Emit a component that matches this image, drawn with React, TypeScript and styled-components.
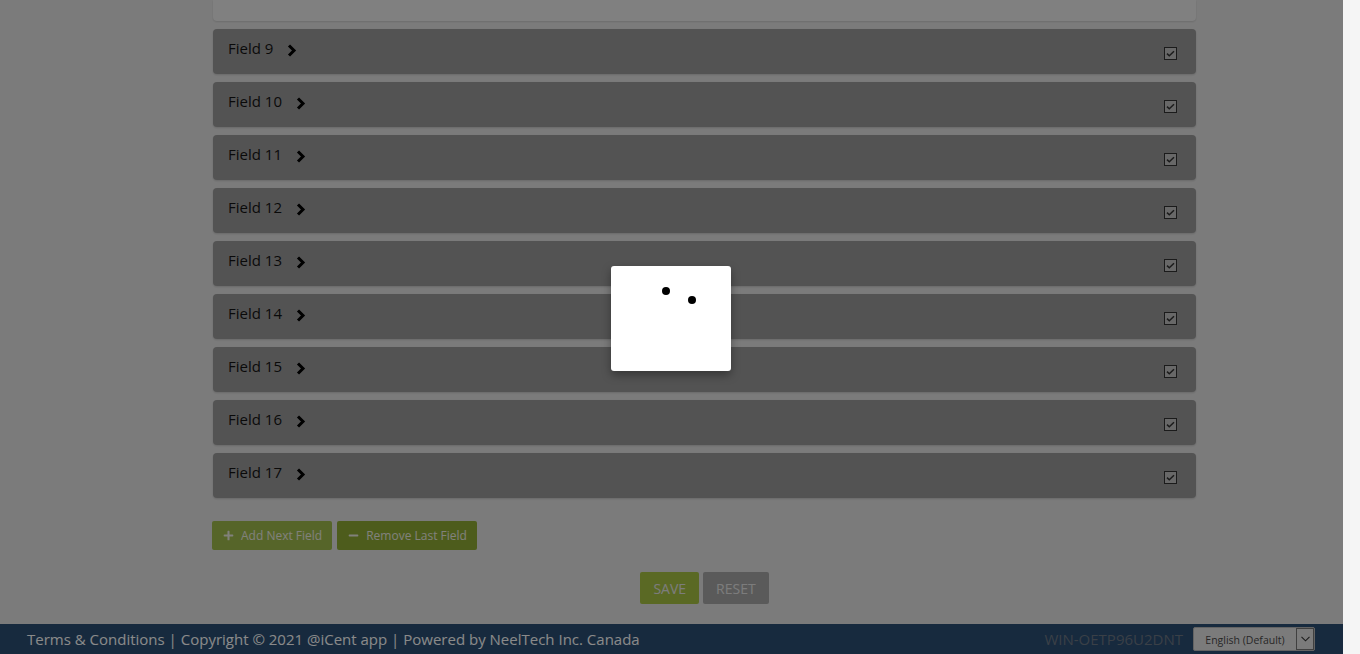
import styled, { createGlobalStyle } from 'styled-components'
import { FaPlus, FaMinus } from 'react-icons/fa'

const GlobalStyle = createGlobalStyle`
  html, body {
    margin: 0;
    padding: 0;
    overflow: hidden;
  }
  body {
    font-family: 'Open Sans', 'Liberation Sans', sans-serif;
    background: #f5f5f5;
  }
`

const fields = [9, 10, 11, 12, 13, 14, 15, 16, 17]

const CheckIcon: React.FC = () => (
  <svg width="13" height="13" viewBox="0 0 13 13">
    <rect x="0.5" y="0.5" width="12" height="12" fill="#c0c0c0" stroke="#333" />
    <path d="M3 6.6 L5.3 8.8 L10 4.2" fill="none" stroke="#333" strokeWidth="1.5" />
  </svg>
)

const ChevronIcon: React.FC = () => (
  <svg width="10" height="13" viewBox="0 0 10 13">
    <path d="M2 1.5 L7 6.5 L2 11.5" fill="none" stroke="#000" strokeWidth="3" strokeLinejoin="miter" />
  </svg>
)

const App: React.FC = () => {
  return (
    <>
      <GlobalStyle />
      <Screen>
        <Page>
          <Main>
            <Content>
              <TopPanel />
              <FieldList>
                {fields.map((n) => (
                  <FieldRow key={n}>
                    <FieldTitle>
                      Field {n}
                      <Chevron>
                        <ChevronIcon />
                      </Chevron>
                    </FieldTitle>
                    <CheckIcon />
                  </FieldRow>
                ))}
              </FieldList>
              <ActionRow>
                <SmallButton $tone="#a0bb4c">
                  <FaPlus size={10} />
                  Add Next Field
                </SmallButton>
                <SmallButton $tone="#8eab34">
                  <FaMinus size={10} />
                  Remove Last Field
                </SmallButton>
              </ActionRow>
              <FormButtons>
                <FormButton $tone="#a6c244">SAVE</FormButton>
                <FormButton $tone="#a7a7a7">RESET</FormButton>
              </FormButtons>
            </Content>
          </Main>
          <Footer>
            <FooterText>
              Terms &amp; Conditions | Copyright © 2021 @iCent app | Powered by NeelTech Inc. Canada
            </FooterText>
            <FooterRight>
              <HostName>WIN-OETP96U2DNT</HostName>
              <LangSelect>
                <LangLabel>English (Default)</LangLabel>
                <LangArrow>
                  <svg width="9" height="6" viewBox="0 0 9 6">
                    <path d="M0.5 0.8 L4.5 4.8 L8.5 0.8" fill="none" stroke="#333" strokeWidth="1.1" />
                  </svg>
                </LangArrow>
              </LangSelect>
            </FooterRight>
          </Footer>
          <Backdrop />
          <LoaderBox>
            <Dot style={{ left: 51, top: 21 }} />
            <Dot style={{ left: 77, top: 30 }} />
          </LoaderBox>
        </Page>
        <Scrollbar />
      </Screen>
    </>
  )
}

export default App

const Screen = styled.div`
  display: flex;
  width: 1360px;
  height: 654px;
  overflow: hidden;
`

const Page = styled.div`
  position: relative;
  width: 1343px;
  height: 654px;
  display: flex;
  flex-direction: column;
  background: #e4e4e4;
`

const Scrollbar = styled.div`
  width: 17px;
  height: 654px;
  background: #f5f5f5;
`

const Main = styled.div`
  height: 624px;
  padding-left: 213px;
  box-sizing: border-box;
`

const Content = styled.div`
  width: 983px;
  display: flex;
  flex-direction: column;
`

const TopPanel = styled.div`
  height: 21px;
  background: #ececec;
  border-radius: 0 0 4px 4px;
  box-shadow: 0 1px 2px rgba(0, 0, 0, 0.12);
`

const FieldList = styled.div`
  display: flex;
  flex-direction: column;
  gap: 8px;
  margin-top: 8px;
`

const FieldRow = styled.div`
  height: 45px;
  display: flex;
  align-items: center;
  justify-content: space-between;
  padding: 0 19px 0 15px;
  background: #9a9a9a;
  border-radius: 4px;
  box-shadow: 0 1px 2px rgba(0, 0, 0, 0.15);
  box-sizing: border-box;
  > svg {
    margin-top: 3px;
  }
`

const FieldTitle = styled.div`
  display: flex;
  align-items: center;
  font-size: 15px;
  color: #141414;
  margin-top: -7px;
`

const Chevron = styled.span`
  display: inline-flex;
  margin-left: 14px;
  svg {
    margin-top: 4px;
  }
`

const ActionRow = styled.div`
  display: flex;
  gap: 5px;
  margin: 23px 0 0 -1px;
`

const SmallButton = styled.button<{ $tone: string }>`
  display: flex;
  align-items: center;
  gap: 7px;
  height: 29px;
  padding: 0 10px 0 11px;
  border: none;
  border-radius: 2px;
  background: ${(p) => p.$tone};
  color: #eeeee4;
  font-family: 'Open Sans', 'Liberation Sans', sans-serif;
  font-size: 12px;
  svg {
    width: 11px;
    height: 11px;
  }
`

const FormButtons = styled.div`
  display: flex;
  justify-content: center;
  gap: 4px;
  margin: 22px 0 0 0;
`

const FormButton = styled.button<{ $tone: string }>`
  height: 32px;
  padding: 0 13px;
  border: none;
  border-radius: 2px;
  background: ${(p) => p.$tone};
  color: #e6e6e6;
  font-family: 'Open Sans', 'Liberation Sans', sans-serif;
  font-size: 14px;
`

const Footer = styled.div`
  height: 30px;
  display: flex;
  align-items: center;
  justify-content: space-between;
  padding: 0 28px 0 27px;
  background: #2b4e73;
`

const FooterText = styled.div`
  font-size: 15px;
  color: #ffffff;
`

const FooterRight = styled.div`
  display: flex;
  align-items: center;
  gap: 10px;
`

const HostName = styled.div`
  font-size: 15px;
  color: #6b7683;
`

const LangSelect = styled.div`
  width: 122px;
  height: 24px;
  display: flex;
  align-items: center;
  background: #e4e4e4;
  border: 1px solid #b8b8b8;
  border-radius: 2px;
  box-sizing: border-box;
`

const LangLabel = styled.div`
  flex: 1;
  text-align: center;
  font-size: 10.5px;
  color: #4a4a4a;
  padding-top: 2px;
`

const LangArrow = styled.div`
  width: 18px;
  height: 22px;
  display: flex;
  align-items: center;
  justify-content: center;
  border: 1px solid #777;
  box-sizing: border-box;
`

const Backdrop = styled.div`
  position: absolute;
  inset: 0;
  background: rgba(0, 0, 0, 0.46);
`

const LoaderBox = styled.div`
  position: absolute;
  left: 611px;
  top: 266px;
  width: 120px;
  height: 105px;
  background: #fff;
  border-radius: 3px;
  box-shadow: 0 4px 10px rgba(0, 0, 0, 0.35);
`

const Dot = styled.span`
  position: absolute;
  width: 8px;
  height: 8px;
  border-radius: 50%;
  background: #000;
`
